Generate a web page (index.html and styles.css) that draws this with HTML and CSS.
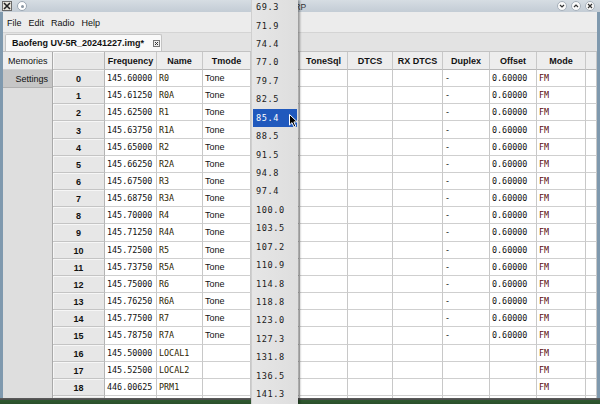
FILE: index.html
```html
<!DOCTYPE html>
<html>
<head>
<meta charset="utf-8">
<link rel="stylesheet" href="styles.css">
</head>
<body>
<div class="frame">
  <div class="titlebar">
    <div class="tb-left">
      <svg class="xicon" width="10" height="10" viewBox="0 0 10 10"><rect x="0.5" y="0.5" width="9" height="9" fill="#e8e4dc" stroke="#6a6a6a"/><path d="M2 2 L8 8 M8 2 L2 8" stroke="#222" stroke-width="1.6"/></svg>
      <span class="tb-circle"><span class="dot"></span></span>
    </div>
    <div class="title">CHIRP</div>
    <div class="tb-right">
      <span class="wbtn"><svg width="6" height="6" viewBox="0 0 6 6"><path d="M1 2 L3 4 L5 2" fill="none" stroke="#333" stroke-width="1.2"/></svg></span>
      <span class="wbtn"><svg width="6" height="6" viewBox="0 0 6 6"><path d="M1 4 L3 2 L5 4" fill="none" stroke="#333" stroke-width="1.2"/></svg></span>
      <span class="wbtn"><svg width="6" height="6" viewBox="0 0 6 6"><path d="M1 1 L5 5 M5 1 L1 5" fill="none" stroke="#333" stroke-width="1.2"/></svg></span>
    </div>
  </div>
  <div class="body">
    <div class="menubar"><span>File</span><span>Edit</span><span>Radio</span><span>Help</span></div>
    <div class="tabbar">
      <div class="tab">Baofeng UV-5R_20241227.img*<span class="close"><svg width="7" height="7" viewBox="0 0 7 7"><rect x="0.5" y="0.5" width="6" height="6" fill="#eee" stroke="#777"/><path d="M2 2 L5 5 M5 2 L2 5" stroke="#333" stroke-width="1"/></svg></span></div>
    </div>
    <div class="main">
      <div class="side">
        <div class="side-tab active">Memories</div>
        <div class="side-tab sel">Settings</div>
      </div>
      <div class="grid">
        <div class="h rh"></div><div class="h">Frequency</div><div class="h">Name</div><div class="h">Tmode</div><div class="h"></div><div class="h">ToneSql</div><div class="h">DTCS</div><div class="h">RX DTCS</div><div class="h">Duplex</div><div class="h">Offset</div><div class="h">Mode</div><div class="h"></div>

        <div class="rh">0</div><div class="c m">145.60000</div><div class="c m nm">R0</div><div class="c">Tone</div><div class="c"></div><div class="c"></div><div class="c"></div><div class="c"></div><div class="c dup">-</div><div class="c m">0.60000</div><div class="c m md">FM</div><div class="c"></div>
        <div class="rh">1</div><div class="c m">145.61250</div><div class="c m nm">R0A</div><div class="c">Tone</div><div class="c"></div><div class="c"></div><div class="c"></div><div class="c"></div><div class="c dup">-</div><div class="c m">0.60000</div><div class="c m md">FM</div><div class="c"></div>
        <div class="rh">2</div><div class="c m">145.62500</div><div class="c m nm">R1</div><div class="c">Tone</div><div class="c"></div><div class="c"></div><div class="c"></div><div class="c"></div><div class="c dup">-</div><div class="c m">0.60000</div><div class="c m md">FM</div><div class="c"></div>
        <div class="rh">3</div><div class="c m">145.63750</div><div class="c m nm">R1A</div><div class="c">Tone</div><div class="c"></div><div class="c"></div><div class="c"></div><div class="c"></div><div class="c dup">-</div><div class="c m">0.60000</div><div class="c m md">FM</div><div class="c"></div>
        <div class="rh">4</div><div class="c m">145.65000</div><div class="c m nm">R2</div><div class="c">Tone</div><div class="c"></div><div class="c"></div><div class="c"></div><div class="c"></div><div class="c dup">-</div><div class="c m">0.60000</div><div class="c m md">FM</div><div class="c"></div>
        <div class="rh">5</div><div class="c m">145.66250</div><div class="c m nm">R2A</div><div class="c">Tone</div><div class="c"></div><div class="c"></div><div class="c"></div><div class="c"></div><div class="c dup">-</div><div class="c m">0.60000</div><div class="c m md">FM</div><div class="c"></div>
        <div class="rh">6</div><div class="c m">145.67500</div><div class="c m nm">R3</div><div class="c">Tone</div><div class="c"></div><div class="c"></div><div class="c"></div><div class="c"></div><div class="c dup">-</div><div class="c m">0.60000</div><div class="c m md">FM</div><div class="c"></div>
        <div class="rh">7</div><div class="c m">145.68750</div><div class="c m nm">R3A</div><div class="c">Tone</div><div class="c"></div><div class="c"></div><div class="c"></div><div class="c"></div><div class="c dup">-</div><div class="c m">0.60000</div><div class="c m md">FM</div><div class="c"></div>
        <div class="rh">8</div><div class="c m">145.70000</div><div class="c m nm">R4</div><div class="c">Tone</div><div class="c"></div><div class="c"></div><div class="c"></div><div class="c"></div><div class="c dup">-</div><div class="c m">0.60000</div><div class="c m md">FM</div><div class="c"></div>
        <div class="rh">9</div><div class="c m">145.71250</div><div class="c m nm">R4A</div><div class="c">Tone</div><div class="c"></div><div class="c"></div><div class="c"></div><div class="c"></div><div class="c dup">-</div><div class="c m">0.60000</div><div class="c m md">FM</div><div class="c"></div>
        <div class="rh">10</div><div class="c m">145.72500</div><div class="c m nm">R5</div><div class="c">Tone</div><div class="c"></div><div class="c"></div><div class="c"></div><div class="c"></div><div class="c dup">-</div><div class="c m">0.60000</div><div class="c m md">FM</div><div class="c"></div>
        <div class="rh">11</div><div class="c m">145.73750</div><div class="c m nm">R5A</div><div class="c">Tone</div><div class="c"></div><div class="c"></div><div class="c"></div><div class="c"></div><div class="c dup">-</div><div class="c m">0.60000</div><div class="c m md">FM</div><div class="c"></div>
        <div class="rh">12</div><div class="c m">145.75000</div><div class="c m nm">R6</div><div class="c">Tone</div><div class="c"></div><div class="c"></div><div class="c"></div><div class="c"></div><div class="c dup">-</div><div class="c m">0.60000</div><div class="c m md">FM</div><div class="c"></div>
        <div class="rh">13</div><div class="c m">145.76250</div><div class="c m nm">R6A</div><div class="c">Tone</div><div class="c"></div><div class="c"></div><div class="c"></div><div class="c"></div><div class="c dup">-</div><div class="c m">0.60000</div><div class="c m md">FM</div><div class="c"></div>
        <div class="rh">14</div><div class="c m">145.77500</div><div class="c m nm">R7</div><div class="c">Tone</div><div class="c"></div><div class="c"></div><div class="c"></div><div class="c"></div><div class="c dup">-</div><div class="c m">0.60000</div><div class="c m md">FM</div><div class="c"></div>
        <div class="rh">15</div><div class="c m">145.78750</div><div class="c m nm">R7A</div><div class="c">Tone</div><div class="c"></div><div class="c"></div><div class="c"></div><div class="c"></div><div class="c dup">-</div><div class="c m">0.60000</div><div class="c m md">FM</div><div class="c"></div>
        <div class="rh">16</div><div class="c m">145.50000</div><div class="c m nm">LOCAL1</div><div class="c"></div><div class="c"></div><div class="c"></div><div class="c"></div><div class="c"></div><div class="c"></div><div class="c"></div><div class="c m md">FM</div><div class="c"></div>
        <div class="rh">17</div><div class="c m">145.52500</div><div class="c m nm">LOCAL2</div><div class="c"></div><div class="c"></div><div class="c"></div><div class="c"></div><div class="c"></div><div class="c"></div><div class="c"></div><div class="c m md">FM</div><div class="c"></div>
        <div class="rh">18</div><div class="c m">446.00625</div><div class="c m nm">PRM1</div><div class="c"></div><div class="c"></div><div class="c"></div><div class="c"></div><div class="c"></div><div class="c"></div><div class="c"></div><div class="c m md">FM</div><div class="c"></div>
        <div class="rh"></div><div class="c"></div><div class="c"></div><div class="c"></div><div class="c"></div><div class="c"></div><div class="c"></div><div class="c"></div><div class="c"></div><div class="c"></div><div class="c"></div><div class="c"></div>
      </div>
    </div>
  </div>
  <div class="bottom"></div>

  <div class="dropdown">
    <div class="opt">69.3</div><div class="opt">71.9</div><div class="opt">74.4</div><div class="opt">77.0</div><div class="opt">79.7</div><div class="opt">82.5</div><div class="opt hi">85.4</div><div class="opt">88.5</div><div class="opt">91.5</div><div class="opt">94.8</div><div class="opt">97.4</div><div class="opt">100.0</div><div class="opt">103.5</div><div class="opt">107.2</div><div class="opt">110.9</div><div class="opt">114.8</div><div class="opt">118.8</div><div class="opt">123.0</div><div class="opt">127.3</div><div class="opt">131.8</div><div class="opt">136.5</div><div class="opt">141.3</div>
  </div>
  <svg class="cursor" width="10" height="14" viewBox="0 0 10 14"><path d="M0.5 0.5 L0.5 11 L3 8.6 L5 13 L6.8 12.2 L4.9 7.9 L8.3 7.9 Z" fill="#000" stroke="#fff" stroke-width="1"/></svg>
</div>
</body>
</html>
```

FILE: styles.css
```css
* { box-sizing: border-box; }
html, body { margin: 0; padding: 0; }
body {
  width: 600px;
  height: 404px;
  overflow: hidden;
  font-family: "Liberation Sans", Arial, sans-serif;
  font-size: 9px;
  color: #111;
  background: #7f99ae;
}
.frame {
  position: relative;
  width: 600px;
  height: 404px;
  display: flex;
  flex-direction: column;
  overflow: hidden;
}
.titlebar {
  height: 12px;
  display: flex;
  align-items: center;
  background: linear-gradient(#d6dde3, #c3ccd5);
  padding: 0 4px 0 2px;
}
.tb-left { display: flex; align-items: center; gap: 5px; width: 60px; }
.xicon { display: block; }
.tb-circle {
  width: 10px; height: 10px; border-radius: 50%;
  background: #fff; border: 1px solid #9aa6b2;
  display: flex; align-items: center; justify-content: center;
}
.tb-circle .dot { width: 3px; height: 3px; border-radius: 50%; background: #8a96a2; }
.title {
  flex: 1;
  text-align: center;
  padding-right: 12px;
  font-size: 8.5px;
  line-height: 12px;
  color: #333;
  padding-top: 1px;
}
.tb-right { display: flex; gap: 4px; width: 60px; justify-content: flex-end; padding-right: 1px; }
.wbtn {
  width: 10px; height: 10px; border-radius: 50%;
  background: #fafafa; border: 1px solid #a6b0ba;
  display: flex; align-items: center; justify-content: center;
}
.wbtn svg { display: block; }
.body {
  height: 386px;
  display: flex;
  flex-direction: column;
  border-left: 3px solid #7f99ae;
  border-right: 3px solid #7f99ae;
  background: #ececec;
}
.menubar {
  height: 20px;
  display: flex;
  align-items: center;
  gap: 7px;
  padding: 2px 0 0 4px;
  font-size: 9px;
  background: #ececec;
}
.tabbar {
  height: 20px;
  background: #e3e3e3;
  border-top: 1px solid #d4d4d4;
  border-bottom: 1px solid #c2c2c2;
  padding: 1px 0 0 2px;
  display: flex;
}
.tab {
  width: 157px;
  height: 17px;
  background: #f9f9f9;
  border: 1px solid #c4c4c4;
  border-bottom: none;
  border-radius: 2px 2px 0 0;
  font-weight: bold;
  font-size: 9px;
  display: flex;
  align-items: center;
  padding-left: 6px;
}
.close { margin-left: 9px; display: flex; }
.close svg { display: block; }
.main {
  flex: 1;
  display: flex;
  min-height: 0;
  overflow: hidden;
}
.side {
  width: 50px;
  background: #dedede;
  border-right: 1px solid #a9a9a9;
  display: flex;
  flex-direction: column;
}
.side-tab {
  height: 18px;
  display: flex;
  align-items: center;
  font-size: 9px;
}
.side-tab.active {
  background: #efefef;
  padding-left: 5px;
  border-bottom: 1px solid #d0d0d0;
}
.side-tab.sel {
  background: #c6c6c6;
  justify-content: flex-end;
  padding-right: 4px;
  border-bottom: 1px solid #b0b0b0;
}
.grid {
  display: grid;
  grid-template-columns: 52px 52px 46px 48px 49px 48px 45px 50px 47px 47px 49px 11px;
  grid-template-rows: 18px;
  grid-auto-rows: 17.17px;
  background: #fff;
  align-content: start;
  overflow: hidden;
}
.grid > div {
  border-right: 1px solid #c8c8c8;
  border-bottom: 1px solid #cfcfcf;
  display: flex;
  align-items: center;
  white-space: nowrap;
  overflow: hidden;
}
.h {
  background: #ededed;
  font-weight: bold;
  justify-content: center;
  font-size: 9px;
  border-bottom: 1px solid #b8b8b8 !important;
}
.rh {
  background: #e7e7e7;
  font-weight: bold;
  justify-content: center;
  font-size: 9px;
  padding-top: 2px;
  border-right: 1px solid #b4b4b4 !important;
  border-bottom: 1px solid #c4c4c4 !important;
  box-shadow: inset 1px 1px 0 #f6f6f6;
}
.c { padding-left: 2px; }
.m {
  font-family: "DejaVu Sans Mono", "Liberation Mono", monospace;
  font-size: 8.4px;
}
.nm { color: #2c2400; }
.md { color: #5a0c0c; }
.dup { padding-left: 3px; }
.bottom {
  height: 6px;
  background: linear-gradient(#5e5e5e 0, #4a4a4a 2px, #2f5a30 2px, #2b4f2b 6px);
}
.dropdown {
  position: absolute;
  left: 251px;
  top: 0;
  width: 47px;
  height: 404px;
  background: linear-gradient(90deg, #e6e6e6, #dedede);
  border-left: 1px solid #cfcfcf;
  box-shadow: 2px 0 2px rgba(0,0,0,0.35);
}
.opt {
  height: 18.43px;
  display: flex;
  align-items: center;
  padding-left: 4px;
  font-family: "DejaVu Sans Mono", "Liberation Mono", monospace;
  font-size: 8.6px;
  letter-spacing: 0.6px;
  color: #1a1a1a;
}
.opt:first-child { margin-top: -2px; }
.opt.hi {
  background: #2059bd;
  color: #fff;
  margin: 0 1px;
  padding-left: 3px;
}
.cursor {
  position: absolute;
  left: 289px;
  top: 114px;
}
```
